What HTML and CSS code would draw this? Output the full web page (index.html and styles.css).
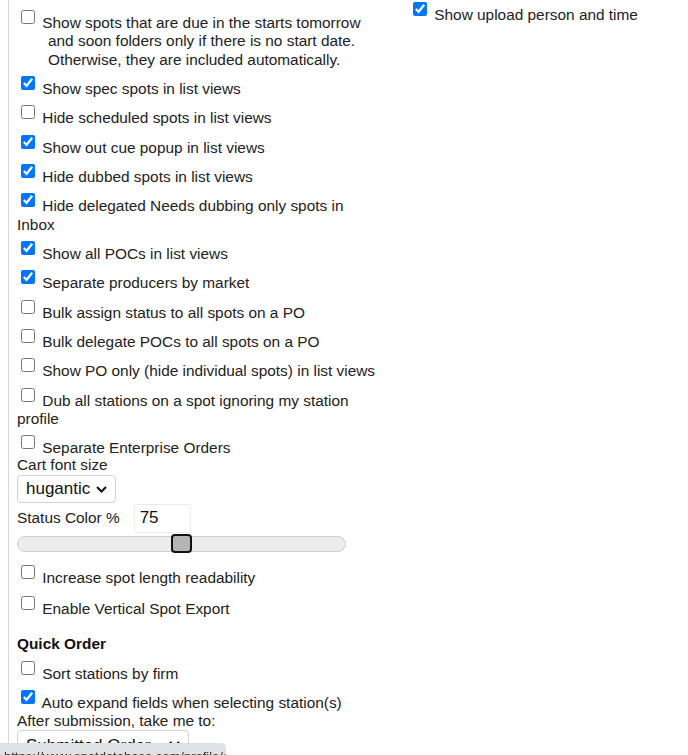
FILE: index.html
```html
<!DOCTYPE html>
<html lang="en">
<head>
  <meta charset="UTF-8" />
  <meta name="viewport" content="width=device-width, initial-scale=1.0"/>
  <title>Preferences</title>
  <link rel="stylesheet" href="styles.css">
</head>
<body>
  <div class="prefs">
    <div class="col col-left">
      <div class="opt opt-long"><input type="checkbox"> Show spots that are due in the starts tomorrow<br>and soon folders only if there is no start date.<br>Otherwise, they are included automatically.</div>
      <div class="opt"><input type="checkbox" checked> Show spec spots in list views</div>
      <div class="opt"><input type="checkbox"> Hide scheduled spots in list views</div>
      <div class="opt"><input type="checkbox" checked> Show out cue popup in list views</div>
      <div class="opt"><input type="checkbox" checked> Hide dubbed spots in list views</div>
      <div class="opt"><input type="checkbox" checked> Hide delegated Needs dubbing only spots in<br>Inbox</div>
      <div class="opt"><input type="checkbox" checked> Show all POCs in list views</div>
      <div class="opt"><input type="checkbox" checked> Separate producers by market</div>
      <div class="opt"><input type="checkbox"> Bulk assign status to all spots on a PO</div>
      <div class="opt"><input type="checkbox"> Bulk delegate POCs to all spots on a PO</div>
      <div class="opt"><input type="checkbox"> Show PO only (hide individual spots) in list views</div>
      <div class="opt"><input type="checkbox"> Dub all stations on a spot ignoring my station<br>profile</div>
      <div class="opt"><input type="checkbox"> Separate Enterprise Orders</div>

      <div class="field-label field-cart">Cart font size</div>
      <div class="select-wrap select-font">
        <select>
          <option>hugantic</option>
        </select>
        <svg class="chev" width="11" height="7" viewBox="0 0 11 7"><path d="M1 1l4.5 4.5L10 1" fill="none" stroke="#111" stroke-width="2"/></svg>
      </div>

      <div class="status-row">
        <span>Status Color %</span>
        <input class="num" type="text" value="75">
      </div>
      <input class="slider" type="range" min="50" max="100" value="75">

      <div class="opt opt-after-slider"><input type="checkbox"> Increase spot length readability</div>
      <div class="opt opt-wide"><input type="checkbox"> Enable Vertical Spot Export</div>

      <h4 class="section">Quick Order</h4>
      <div class="opt opt-first"><input type="checkbox"> Sort stations by firm</div>
      <div class="opt"><input type="checkbox" checked> Auto expand fields when selecting station(s)</div>
      <div class="field-label field-tight">After submission, take me to:</div>
      <div class="select-wrap select-order">
        <select>
          <option>Submitted Order</option>
        </select>
        <svg class="chev" width="11" height="7" viewBox="0 0 11 7"><path d="M1 1l4.5 4.5L10 1" fill="none" stroke="#111" stroke-width="2"/></svg>
      </div>
    </div>

    <div class="col col-right">
      <div class="opt opt-top"><input type="checkbox" checked> Show upload person and time</div>
    </div>
  </div>

  <div class="status-bar">https://www.spotdatabase.com/profile/edit?id=906#</div>
</body>
</html>
```

FILE: styles.css
```css
body {
  margin: 0;
  font-family: "Liberation Sans", Arial, sans-serif;
  font-size: 15.4px;
  line-height: 18.5px;
  color: #222;
  background: #fff;
  overflow: hidden;
}
.prefs {
  display: flex;
  align-items: flex-start;
}
.col-left {
  margin-left: 8px;
  border-left: 1px solid #d6d6d6;
  padding: 3px 26px 40px 8px;
  width: 366px;
  min-height: 760px;
}
.opt {
  margin-top: 3.8px;
}
.opt input {
  width: 14px;
  height: 14px;
  margin: 3px 3px 3px 4px;
  vertical-align: 4px;
}
.opt-long {
  padding-left: 31px;
  text-indent: -31px;
}
.opt-top {
  margin-top: -1.3px;
}
.field-label {
  margin-top: 0;
}
.field-cart {
  margin-top: -1.5px;
}
.field-tight {
  margin-top: -1px;
}
.select-wrap {
  position: relative;
  display: inline-block;
  vertical-align: top;
}
.select-wrap select {
  appearance: none;
  -webkit-appearance: none;
  font-family: "Liberation Sans", Arial, sans-serif;
  font-size: 17px;
  color: #111;
  background: #fff;
  border: 1px solid #d2d2d2;
  border-radius: 4px;
  height: 28px;
  padding: 0 0 0 8px;
}
.select-font select { width: 99px; }
.select-order select { width: 172px; height: 30px; }
.chev {
  position: absolute;
  right: 9px;
  top: 11px;
  pointer-events: none;
}
.status-row {
  display: flex;
  align-items: center;
  gap: 14px;
  margin-top: 1px;
}
.num {
  width: 57px;
  height: 29px;
  box-sizing: border-box;
  border: 1px solid #ececec;
  border-radius: 3px;
  padding: 0 5px;
  font-family: "Liberation Sans", Arial, sans-serif;
  font-size: 17px;
  color: #111;
}
.slider {
  -webkit-appearance: none;
  appearance: none;
  display: block;
  width: 329px;
  height: 16px;
  margin: 3px 0 0 0;
  background: #ececec;
  border: 1px solid #cfcfcf;
  border-radius: 8px;
  box-sizing: border-box;
}
.slider::-webkit-slider-thumb {
  -webkit-appearance: none;
  width: 21px;
  height: 19px;
  background: #b4b4b4;
  border: 2px solid #111;
  border-radius: 4px;
  box-sizing: border-box;
}
.opt-after-slider {
  margin-top: 10px;
}
.opt-wide {
  margin-top: 6px;
}
.section {
  margin: 16.5px 0 0 0;
  font-size: 15.4px;
  font-weight: bold;
  color: #111;
}
.opt-first {
  margin-top: 4px;
}
.status-bar {
  position: fixed;
  left: 0;
  bottom: -16px;
  width: 218px;
  height: 22px;
  padding: 6px 4px 0 4px;
  background: #dee1e6;
  border-top-right-radius: 5px;
  font-size: 13px;
  line-height: 16px;
  color: #333;
  white-space: nowrap;
  overflow: hidden;
}
```
